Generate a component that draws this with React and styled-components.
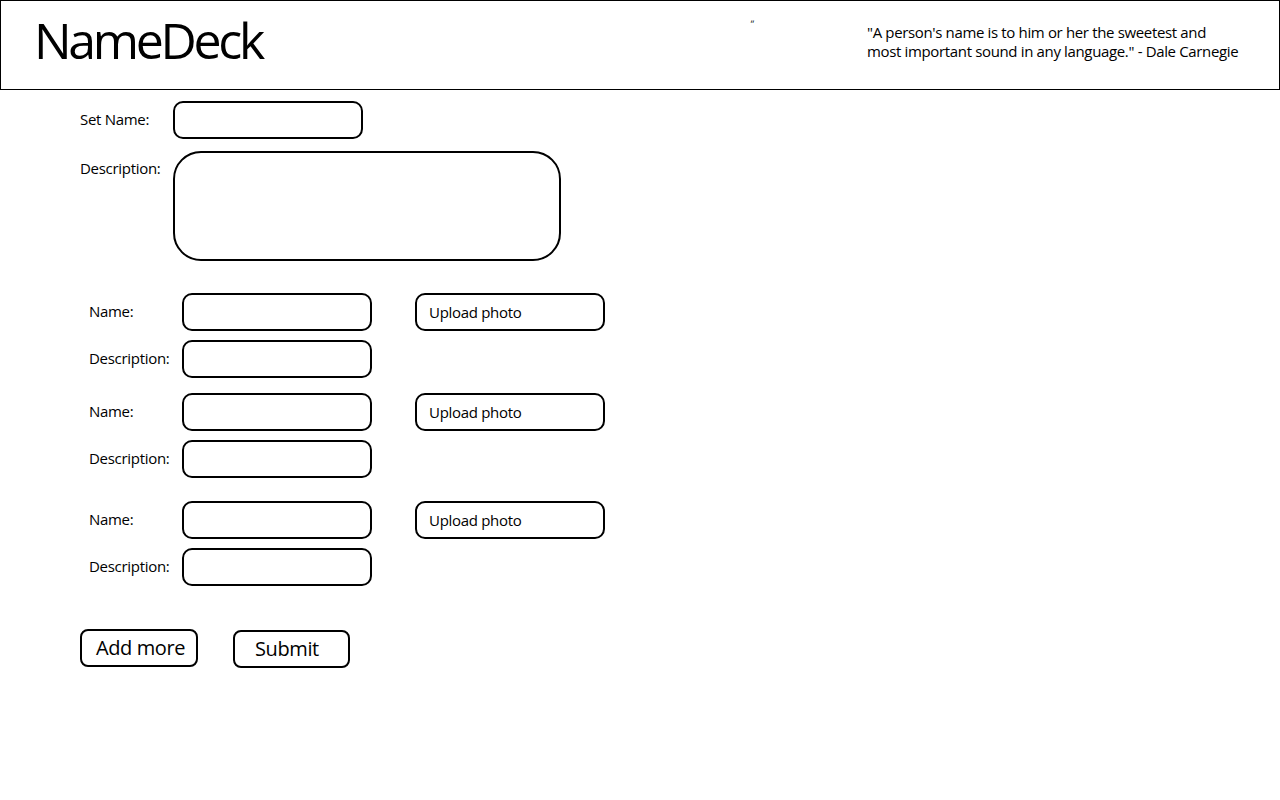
import React from 'react'
import styled, { createGlobalStyle } from 'styled-components'

const GlobalStyle = createGlobalStyle`
    body {
        margin: 0;
        background: #fff;
        font-family: "Open Sans", "Noto Sans", sans-serif;
        color: #000;
    }
`

const Header = styled.header`
    box-sizing: border-box;
    height: 90px;
    width: 1280px;
    border: 1px solid #000;
    display: flex;
    align-items: flex-start;
`

const Logo = styled.h1`
    margin: 9px 0 0 33px;
    font-size: 50px;
    font-weight: 400;
    letter-spacing: -3.3px;
    line-height: 60px;
    width: 716px;
`

const Tick = styled.span`
    margin-top: 17px;
    font-size: 8px;
    width: 117px;
`

const Quote = styled.p`
    margin: 22px 0 0 0;
    font-size: 15px;
    line-height: 19px;
    letter-spacing: -0.35px;
`

const Form = styled.form`
    display: flex;
    flex-direction: column;
    padding: 11px 0 0 80px;
`

const Row = styled.div`
    display: flex;
    align-items: ${p => (p.top ? 'flex-start' : 'center')};
    margin-top: ${p => p.gap || 0}px;
    padding-left: ${p => p.indent || 0}px;
`

const Label = styled.label`
    width: ${p => p.w || 93}px;
    font-size: 15px;
    letter-spacing: -0.3px;
    margin-top: ${p => p.offset || 0}px;
    margin-bottom: ${p => (p.offset ? 0 : 2)}px;
`

const Field = styled.div`
    box-sizing: border-box;
    width: ${p => p.w || 190}px;
    height: ${p => p.h || 38}px;
    border: 2px solid #000;
    border-radius: ${p => p.r || 10}px;
`

const UploadBox = styled.div`
    box-sizing: border-box;
    width: 190px;
    height: 38px;
    margin-left: 43px;
    border: 2px solid #000;
    border-radius: 10px;
    display: flex;
    align-items: center;
    padding-left: 12px;
    font-size: 15px;
    letter-spacing: -0.3px;
`

const Buttons = styled.div`
    display: flex;
    align-items: flex-start;
    gap: 35px;
    margin-top: 43px;
`

const Button = styled.button`
    box-sizing: border-box;
    width: ${p => p.w || 118}px;
    height: 38px;
    margin-top: ${p => p.drop || 0}px;
    background: #fff;
    border: 2px solid #000;
    border-radius: 8px;
    font-family: inherit;
    font-size: 20px;
    letter-spacing: -0.4px;
    text-align: left;
    padding: 0 0 1px ${p => p.pad || 14}px;
    color: #000;
`

const entries = [
    { gap: 32 },
    { gap: 15 },
    { gap: 23 },
]

const Entry = ({ gap }) => (
    <>
        <Row gap={gap} indent={9}>
            <Label>Name:</Label>
            <Field />
            <UploadBox>Upload photo</UploadBox>
        </Row>
        <Row gap={9} indent={9}>
            <Label>Description:</Label>
            <Field />
        </Row>
    </>
)

const App = () => (
    <>
        <GlobalStyle />
        <Header>
            <Logo>NameDeck</Logo>
            <Tick>״</Tick>
            <Quote>
                "A person's name is to him or her the sweetest and<br />
                most important sound in any language." - Dale Carnegie
            </Quote>
        </Header>
        <Form>
            <Row>
                <Label>Set Name:</Label>
                <Field />
            </Row>
            <Row top gap={12}>
                <Label offset={7}>Description:</Label>
                <Field w={388} h={110} r={28} />
            </Row>
            {entries.map((e, i) => (
                <Entry key={i} gap={e.gap} />
            ))}
            <Buttons>
                <Button type="button">Add more</Button>
                <Button type="button" w={117} drop={1} pad={20}>Submit</Button>
            </Buttons>
        </Form>
    </>
)

export default App
